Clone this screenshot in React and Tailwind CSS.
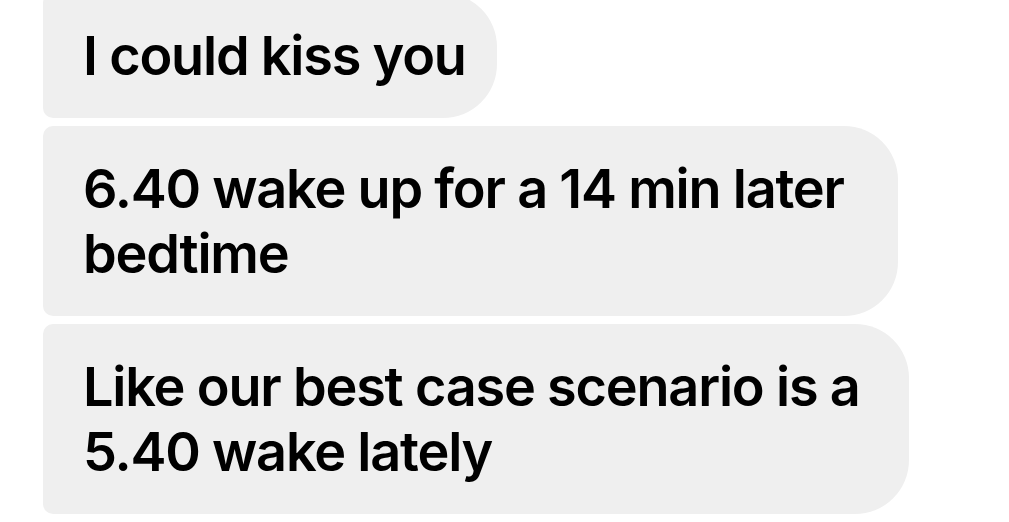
const messages = [
  { lines: ["I could kiss you"], width: "w-[454px]" },
  { lines: ["6.40 wake up for a 14 min later", "bedtime"], width: "w-[855px]" },
  { lines: ["Like our best case scenario is a", "5.40 wake lately"], width: "w-[866px]" },
];

function Bubble({ lines, width }) {
  return (
    <div
      className={`${width} bg-[#efefef] rounded-l-[10px] rounded-r-[54px] pl-[40px] py-[30px] text-black text-[54px] leading-[65px] font-semibold tracking-[-1.2px] whitespace-nowrap`}
    >
      {lines.map((line, i) => (
        <div key={i}>{line}</div>
      ))}
    </div>
  );
}

export default function App() {
  return (
    <div
      className="h-[522px] w-full overflow-hidden bg-white"
      style={{ fontFamily: "Inter, 'Liberation Sans', sans-serif" }}
    >
      <div className="flex flex-col items-start gap-[8px] pl-[43px] -mt-[7px]">
        {messages.map((m, i) => (
          <Bubble key={i} lines={m.lines} width={m.width} />
        ))}
        <div className="w-[700px] h-[60px] bg-[#efefef] rounded-l-[10px] rounded-r-[54px]" />
      </div>
    </div>
  );
}
